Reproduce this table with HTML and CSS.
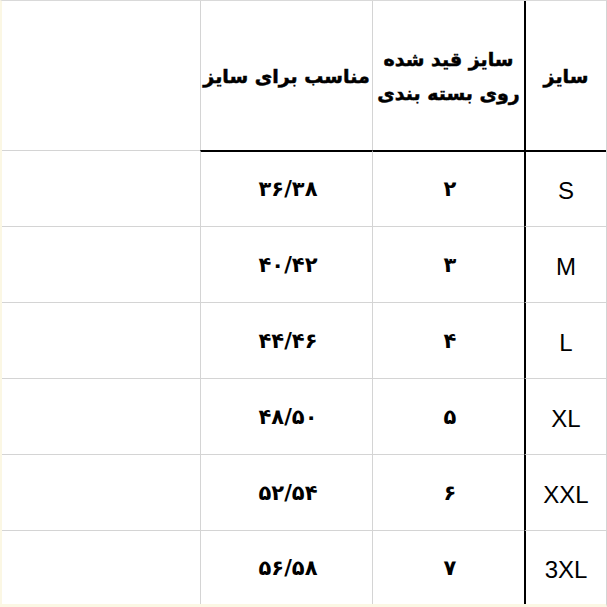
FILE: index.html
```html
<!DOCTYPE html>
<html lang="fa" dir="rtl">
<head>
<meta charset="utf-8">
<title>جدول سایز</title>
<link rel="stylesheet" href="styles.css">
</head>
<body>
<div class="sheet">
  <div class="cell head size-col">سایز</div>
  <div class="cell head mid-col">سایز قید شده<br>روی بسته بندی</div>
  <div class="cell head fit-col">مناسب برای سایز</div>
  <div class="cell head empty-col"></div>

  <div class="cell first size-col latin">S</div>
  <div class="cell first mid-col num"><span class="digits" dir="ltr">۲</span></div>
  <div class="cell first fit-col num"><span class="digits" dir="ltr">۳۶/۳۸</span></div>
  <div class="cell first empty-col"></div>

  <div class="cell size-col latin">M</div>
  <div class="cell mid-col num"><span class="digits" dir="ltr">۳</span></div>
  <div class="cell fit-col num"><span class="digits" dir="ltr">۴۰/۴۲</span></div>
  <div class="cell empty-col"></div>

  <div class="cell size-col latin">L</div>
  <div class="cell mid-col num"><span class="digits" dir="ltr">۴</span></div>
  <div class="cell fit-col num"><span class="digits" dir="ltr">۴۴/۴۶</span></div>
  <div class="cell empty-col"></div>

  <div class="cell size-col latin">XL</div>
  <div class="cell mid-col num"><span class="digits" dir="ltr">۵</span></div>
  <div class="cell fit-col num"><span class="digits" dir="ltr">۴۸/۵۰</span></div>
  <div class="cell empty-col"></div>

  <div class="cell size-col latin">XXL</div>
  <div class="cell mid-col num"><span class="digits" dir="ltr">۶</span></div>
  <div class="cell fit-col num"><span class="digits" dir="ltr">۵۲/۵۴</span></div>
  <div class="cell empty-col"></div>

  <div class="cell size-col latin">3XL</div>
  <div class="cell mid-col num"><span class="digits" dir="ltr">۷</span></div>
  <div class="cell fit-col num"><span class="digits" dir="ltr">۵۶/۵۸</span></div>
  <div class="cell empty-col"></div>
</div>
</body>
</html>
```

FILE: styles.css
```css
html, body {
  margin: 0;
  padding: 0;
  background: #ffffff;
}

.sheet {
  box-sizing: border-box;
  width: 607px;
  height: 607px;
  display: grid;
  grid-template-columns: 82px 152px 172px 198px;
  grid-template-rows: 149px 76px 76px 76px 76px 76px 74px;
  border-top: 1px solid #d9d9d9;
  border-left: 2px solid #fbf7e4;
  border-right: 1px solid #d4d4d4;
  border-bottom: 3px solid #fbf7e4;
  background: #ffffff;
  font-family: "DejaVu Sans", "Liberation Sans", sans-serif;
  color: #000000;
}

.cell {
  box-sizing: border-box;
  display: flex;
  align-items: center;
  justify-content: center;
  text-align: center;
  border-top: 1px solid #d4d4d4;
}

.head {
  border-top: none;
  font-weight: bold;
  font-size: 19px;
  line-height: 34px;
  -webkit-text-stroke: 0.5px #000000;
}

.first {
  border-top: 2px solid #000000;
}

.first.empty-col {
  border-top: 1px solid #d4d4d4;
}

.size-col {
  border-left: 2px solid #000000;
}

.mid-col,
.fit-col {
  border-left: 1px solid #d4d4d4;
}

.latin {
  font-family: "Liberation Sans", Arial, sans-serif;
  font-size: 24px;
  padding-top: 4px;
}

.num {
  font-weight: bold;
  font-size: 21px;
}

.digits {
  letter-spacing: 3px;
  margin-right: -3px;
}
```
